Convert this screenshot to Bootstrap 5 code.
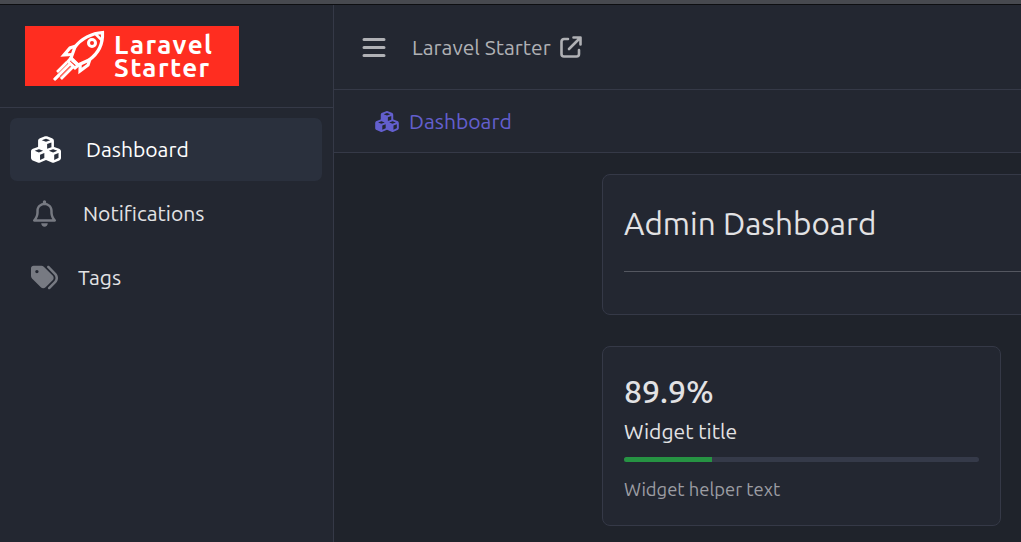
<!DOCTYPE html>
<html lang="en" data-bs-theme="dark">
<head>
<meta charset="utf-8">
<meta name="viewport" content="width=device-width, initial-scale=1">
<title>Laravel Starter</title>
<link href="https://cdn.jsdelivr.net/npm/bootstrap@5.3.0/dist/css/bootstrap.min.css" rel="stylesheet">
<style>
  body { font-family: Ubuntu, "Noto Sans", sans-serif; font-size: 21.1px; line-height: 32px; background: #1f232b; color: #e2e2e4; border-top: 4px solid #47494f; }
  .app-shell { border-top: 1px solid #0d0e11; }
  .side { width: 334px; background: #232731; border-right: 1px solid #353947; }
  .side-head { height: 103px; padding: 21px 25px; border-bottom: 1px solid #353947; }
  .brand { width: 214px; height: 60px; background: #ff2d20; color: #fff; }
  .brand-text { font-size: 26px; font-weight: 700; line-height: 23px; letter-spacing: 1.4px; padding-left: 89px; padding-top: 7px; }
  .brand svg { left: 25px; top: 0; }
  .brand-text span { display: block; }
  .menu { padding: 10px 11px 0 10px; }
  .menu .nav-link { height: 63px; margin-bottom: 1px; padding: 0 21px; border-radius: 7px; color: #e2e2e4; }
  .menu .nav-link.active { background: #2a303d; color: #fff; }
  .menu .nav-link:not(.active) svg { color: #777a82; }
  .menu span, .topbar span, .crumbs span { padding-bottom: 2px; }
  .topbar { height: 85px; padding: 1px 0 0 28px; background: #232731; color: #b0b1b5; border-bottom: 1px solid #353947; }
  .crumbs { height: 63px; padding: 1px 0 0 41px; background: #232731; color: #635fce; border-bottom: 1px solid #353947; }
  .content { padding: 21px 0 0 268px; }
  .panel { background: #232731; border: 1px solid #353947; border-radius: 8px; padding: 0 21px; }
  .panel-wide { width: 860px; height: 141px; margin-bottom: 31px; }
  .panel-widget { width: 399px; height: 180px; padding-top: 23px; }
  .panel-title { font-size: 31.5px; line-height: 40px; padding-top: 29px; margin: 0; font-weight: 400; color: #e2e2e4; }
  .panel-wide hr { margin: 27px 0 0; border-top: 1px solid #545760; opacity: 1; }
  .figure-value { font-size: 32px; line-height: 43px; margin-bottom: 2px; font-weight: 500; }
  .progress { height: 5px; --bs-progress-bg: #353a49; --bs-progress-border-radius: 3px; margin-top: 10px; }
  .progress-bar { background: #269343; }
  .helper { font-size: 18.4px; line-height: 28px; margin-top: 13px; color: #9c9da3; }
</style>
</head>
<body class="overflow-hidden vh-100">
<div class="app-shell d-flex h-100">
  <aside class="side flex-shrink-0">
    <div class="side-head">
      <div class="brand position-relative">
        <svg class="position-absolute" width="58" height="60" viewBox="0 0 58 60" fill="none" stroke="#fff" stroke-width="3.2">
          <path d="M52.500 6.500C42 7 31 13 25 21l-4 11 7 7 11-5C49 27 53 17 52.500 6.500z"/>
          <circle cx="42" cy="17" r="3.500" stroke-width="3"/>
          <path d="M44.500 7l7 7" stroke-width="2.500"/>
          <path d="M26 20l-6 2-6 7 8-.5M40 33l-2 6-8 6 .2-8" stroke-width="3.200"/>
          <path d="M21 32l-3 3.500 7 6.500 3.500-3M22 34l5 4" stroke-width="3"/>
          <path d="M17 36L7 46M20 38L5 53M23 41L11 53" stroke-width="2.600"/>
          <path d="M18 38L8 48M22 40L10 52" stroke-width="1.600" stroke-opacity=".5"/>
          <path d="M9 49l-5 5" stroke-width="3"/>
        </svg>
        <div class="brand-text"><span>Laravel</span><span>Starter</span></div>
      </div>
    </div>
    <nav class="menu nav flex-column">
      <a class="nav-link active d-flex align-items-center" href="#">
        <svg width="30" height="27" viewBox="0 0 576 512" fill="currentColor"><path id="cubes" d="M290.800 48.600l78.400 29.700L288 109.500 206.800 78.300l78.400-29.700c1.800-.7 3.800-.7 5.700 0zM136 92.500V204.700c-1.300 .4-2.600 .8-3.900 1.300l-96 36.400C14.400 250.600 0 271.500 0 294.700V413.900c0 22.200 13.100 42.300 33.500 51.300l96 42.200c14.400 6.300 30.700 6.300 45.100 0L288 457.500l113.500 49.900c14.400 6.300 30.700 6.300 45.100 0l96-42.200c20.300-8.900 33.500-29.100 33.500-51.300V294.700c0-23.300-14.400-44.100-36.100-52.400l-96-36.400c-1.300-.5-2.600-.9-3.900-1.300V92.500c0-23.300-14.400-44.100-36.100-52.400L308 3.700c-12.800-4.800-26.900-4.800-39.700 0l-96 36.400C150.400 48.400 136 69.300 136 92.500zM392 210.600l-82.400 31.200V152.600L392 121v89.600zM154.800 250.900l78.400 29.700L152 311.700 70.800 280.600l78.400-29.700c1.800-.7 3.800-.7 5.700 0zm18.800 204.400V354.800L256 323.200v95.900l-82.400 36.200zM421.200 250.900c1.800-.7 3.800-.7 5.700 0l78.400 29.700L424 311.700l-81.200-31.100 78.400-29.700zM523.200 421.200l-77.600 34.100V354.800L528 323.200v90.700c0 3.200-1.900 6-4.800 7.300z"/></svg>
        <span style="margin-left:25px">Dashboard</span>
      </a>
      <a class="nav-link d-flex align-items-center" href="#">
        <svg style="margin-left:2px" width="23" height="27" viewBox="0 0 448 512" fill="currentColor"><path d="M224 0c-17.700 0-32 14.300-32 32V49.900C119.500 61.400 64 124.200 64 200v33.400c0 45.400-15.500 89.500-43.800 124.900L5.300 377c-5.800 7.200-6.900 17.100-2.900 25.400S14.800 416 24 416H424c9.200 0 17.600-5.300 21.600-13.600s2.900-18.200-2.900-25.400l-14.900-18.600C399.500 322.900 384 278.800 384 233.400V200c0-75.800-55.500-138.600-128-150.100V32c0-17.700-14.300-32-32-32zm0 96h8c57.400 0 104 46.600 104 104v33.400c0 47.900 13.900 94.600 39.700 134.600H72.300C98.100 328 112 281.300 112 233.400V200c0-57.400 46.600-104 104-104h8zm64 352H224 160c0 17 6.700 33.300 18.700 45.300s28.300 18.700 45.300 18.700s33.300-6.700 45.300-18.700s18.700-28.300 18.700-45.300z"/></svg>
        <span style="margin-left:27px">Notifications</span>
      </a>
      <a class="nav-link d-flex align-items-center" href="#">
        <svg width="27" height="27" viewBox="0 0 512 512" fill="currentColor"><path d="M345 39.100L472.800 168.400c52.400 53 52.400 138.200 0 191.200L360.800 472.900c-9.300 9.400-24.500 9.500-33.900 .2s-9.500-24.500-.2-33.900L438.600 325.900c33.900-34.300 33.900-89.400 0-123.700L310.900 72.900c-9.300-9.400-9.200-24.600 .2-33.900s24.600-9.200 33.900 .2zM0 229.500V80C0 53.500 21.500 32 48 32H197.500c17 0 33.300 6.700 45.300 18.700l168 168c25 25 25 65.500 0 90.500L277.300 442.700c-25 25-65.500 25-90.500 0l-168-168C6.700 262.700 0 246.500 0 229.500zM144 144a32 32 0 1 0 -64 0 32 32 0 1 0 64 0z"/></svg>
        <span style="margin-left:20px">Tags</span>
      </a>
    </nav>
  </aside>
  <main class="flex-grow-1 overflow-hidden">
    <header class="topbar d-flex align-items-center">
      <svg width="24" height="22" viewBox="0 0 24 22" stroke="currentColor" stroke-width="3" stroke-linecap="round"><path d="M2 2.500h20M2 10.500h20M2 18.500h20"/></svg>
      <span style="margin-left:26px">Laravel Starter</span>
      <svg style="margin:0 0 2px 9px" width="22" height="22" viewBox="0 0 22 22" fill="none" stroke="currentColor" stroke-width="2.600" stroke-linecap="round" stroke-linejoin="round"><path d="M8 3H4a2.500 2.500 0 0 0-2.500 2.500v12.500A2.500 2.500 0 0 0 4 20.500h12.500A2.500 2.500 0 0 0 19 18v-4M13.500 1.500h7v7M20 2L9 13"/></svg>
    </header>
    <div class="crumbs d-flex align-items-center">
      <svg width="24" height="21" viewBox="0 0 576 512" fill="currentColor"><use href="#cubes"/></svg>
      <span style="margin-left:10px">Dashboard</span>
    </div>
    <div class="content">
      <section class="panel panel-wide">
        <h4 class="panel-title">Admin Dashboard</h4>
        <hr>
      </section>
      <section class="panel panel-widget">
        <div class="figure-value">89.9%</div>
        <div class="widget-title">Widget title</div>
        <div class="progress"><div class="progress-bar" style="width:24.8%"></div></div>
        <div class="helper">Widget helper text</div>
      </section>
    </div>
  </main>
</div>
<script src="https://cdn.jsdelivr.net/npm/bootstrap@5.3.0/dist/js/bootstrap.bundle.min.js"></script>
</body>
</html>
